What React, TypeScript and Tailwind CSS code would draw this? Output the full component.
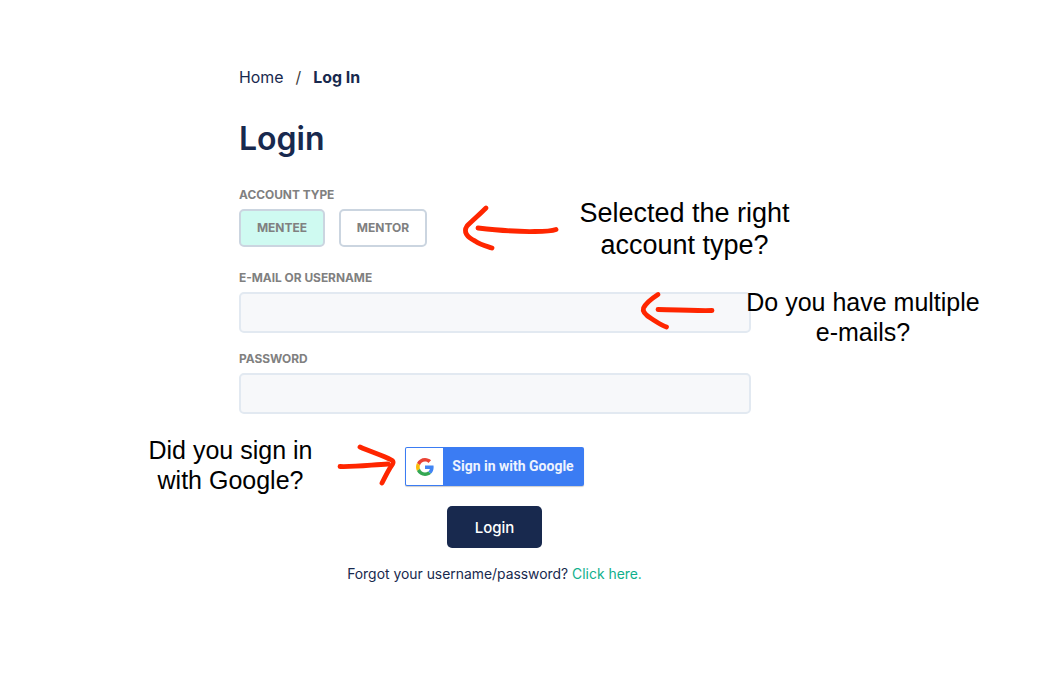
import type { ReactNode } from "react";
import clsx from "clsx";

function GoogleLogo() {
  return (
    <svg viewBox="0 0 48 48" className="h-[18px] w-[18px]">
      <path
        fill="#EA4335"
        d="M24 9.5c3.54 0 6.71 1.22 9.21 3.6l6.85-6.85C35.9 2.38 30.47 0 24 0 14.62 0 6.51 5.38 2.56 13.22l7.98 6.19C12.43 13.72 17.74 9.5 24 9.5z"
      />
      <path
        fill="#4285F4"
        d="M46.98 24.55c0-1.57-.15-3.09-.38-4.55H24v9.02h12.94c-.58 2.96-2.26 5.48-4.78 7.18l7.73 6c4.51-4.18 7.09-10.36 7.09-17.65z"
      />
      <path
        fill="#FBBC05"
        d="M10.53 28.59c-.48-1.45-.76-2.99-.76-4.59s.27-3.14.76-4.59l-7.98-6.19C.92 16.46 0 20.12 0 24c0 3.88.92 7.54 2.56 10.78l7.97-6.19z"
      />
      <path
        fill="#34A853"
        d="M24 48c6.48 0 11.93-2.13 15.89-5.81l-7.73-6c-2.15 1.45-4.92 2.3-8.16 2.3-6.26 0-11.57-4.22-13.47-9.91l-7.98 6.19C6.51 42.62 14.62 48 24 48z"
      />
    </svg>
  );
}

function Label({ children }: { children: ReactNode }) {
  return (
    <span className="block text-[11.9px] leading-4 font-bold text-[#808080]">
      {children}
    </span>
  );
}

function AccountButton({
  selected,
  className,
  children,
}: {
  selected?: boolean;
  className: string;
  children: ReactNode;
}) {
  return (
    <button
      type="button"
      className={clsx(
        "h-[38px] rounded-[5px] border-2 border-[#cbd5e0] text-[12px] font-bold text-[#808080]",
        selected ? "bg-[#cffaf1]" : "bg-white",
        className
      )}
    >
      {children}
    </button>
  );
}

function Note({
  className,
  children,
}: {
  className: string;
  children: ReactNode;
}) {
  return (
    <p
      className={clsx(
        "absolute text-center whitespace-nowrap text-black font-['Liberation_Sans',sans-serif]",
        className
      )}
    >
      {children}
    </p>
  );
}

// Hand drawn arrows pointing at the fields
function Arrows() {
  return (
    <svg
      viewBox="0 0 1061 678"
      className="pointer-events-none absolute top-0 left-0 h-[678px] w-[1061px]"
      fill="none"
      stroke="#ff2600"
      strokeWidth="4.8"
      strokeLinecap="round"
      strokeLinejoin="round"
    >
      <path d="M486 208 C480 214 472 221 467 226 C463 232 467 237 475 241 C481 245 486 246 492 248" />
      <path d="M478 228 C496 230 517 232 535 231.5 C546 231.5 552 231 556 229.5" />
      <path d="M658 294.500 C651 299 646 303 643.500 308 C642 312 647 316 652 319 C657 322 661 325 666.500 327" />
      <path d="M658 309.500 C675 310 695 310.800 712 310.500" />
      <path d="M340 466.500 C357 467 374 464.500 388 464" />
      <path d="M360 447 C371 452 382 455 391.500 460 C395 462 392 465 390 468 C387 473 384 479 382 483" />
    </svg>
  );
}

export default function App() {
  return (
    <div className="relative h-[678px] w-[1061px] overflow-hidden bg-white text-[#18294e] font-['Inter',sans-serif]">
      <main className="ml-[239px] flex w-[512px] flex-col pt-[66px]">
        <nav className="flex text-[15.9px] leading-6">
          <a>Home</a>
          <span className="mx-3 text-[#404040]">/</span>
          <a className="font-bold">Log In</a>
        </nav>

        <h1 className="mt-[29px] text-[32px] leading-10 font-semibold">
          Login
        </h1>

        <div className="mt-7">
          <Label>ACCOUNT TYPE</Label>
          <div className="mt-1.5 flex gap-3.5">
            <AccountButton selected className="w-[86px]">
              MENTEE
            </AccountButton>
            <AccountButton className="w-[88px]">MENTOR</AccountButton>
          </div>
        </div>

        <div className="mt-[23px]">
          <Label>E-MAIL OR USERNAME</Label>
          <input
            type="text"
            className="mt-1.5 block h-[41px] w-full rounded-[5px] border-2 border-[#e2e9f1] bg-[#f7f8fa] px-3"
          />
        </div>

        <div className="mt-[18px]">
          <Label>PASSWORD</Label>
          <input
            type="password"
            className="mt-1.5 block h-[41px] w-full rounded-[5px] border-2 border-[#e2e9f1] bg-[#f7f8fa] px-3"
          />
        </div>

        <div className="mt-[33px] flex flex-col items-center pr-px">
          <button
            type="button"
            className="flex h-[39px] w-[179px] items-center rounded-[2px] bg-[#3b7cf3] p-px shadow-[0_1px_1px_rgba(0,0,0,0.2)]"
          >
            <span className="flex h-full w-[37px] items-center justify-center rounded-l-[1px] bg-white">
              <GoogleLogo />
            </span>
            <span className="flex-1 text-center text-[14px] font-bold whitespace-nowrap text-[#eef3fe] font-['Roboto',sans-serif]">
              Sign in with Google
            </span>
          </button>
          <button
            type="button"
            className="mt-5 h-[42px] w-[95px] rounded-[5px] bg-[#18294e] pt-0.5 text-[15px] font-medium text-white"
          >
            Login
          </button>
          <p className="mt-4 text-[13.9px] leading-5 whitespace-nowrap">
            Forgot your username/password?{" "}
            <a className="text-[#10b08c]">Click here.</a>
          </p>
        </div>
      </main>

      <Arrows />
      <Note className="top-[197px] left-[579px] w-[211px] text-[27px] leading-8">
        Selected the right
        <br />
        account type?
      </Note>
      <Note className="top-[287px] left-[746px] w-[234px] text-[25px] leading-[30px]">
        Do you have multiple
        <br />
        e-mails?
      </Note>
      <Note className="top-[435px] left-[148px] w-[165px] text-[25px] leading-[30px]">
        Did you sign in
        <br />
        with Google?
      </Note>
    </div>
  );
}
